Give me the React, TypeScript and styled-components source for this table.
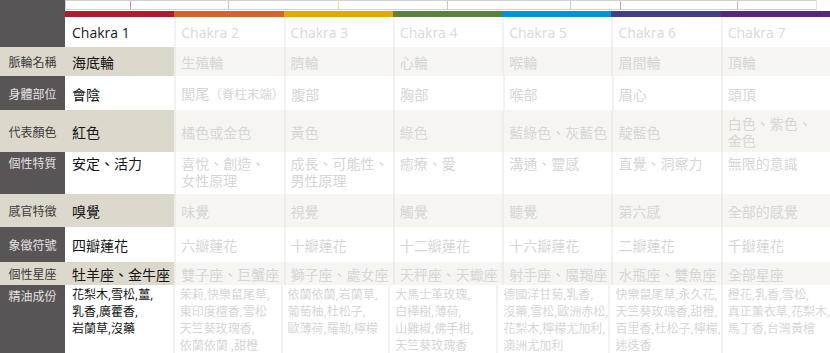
import styled, { createGlobalStyle } from "styled-components"

const GlobalStyle = createGlobalStyle`
    html, body {
        margin: 0;
        padding: 0;
        background: #fff;
        overflow: hidden;
    }
    body {
        font-family: "Open Sans", "Noto Sans CJK TC", sans-serif;
    }
`

type Tone = "white" | "beige"
type Align = "center" | "top"

const colors = ["#b01c2e", "#d4622a", "#e8a800", "#5a8340", "#0093d7", "#433d8d", "#5b2383"]

// marker positions on the track, from the track's left edge
const ticks = [
    { x: 65, c: "#e38b98" },
    { x: 163, c: "#f1b68f" },
    { x: 273, c: "#f3d697" },
    { x: 382, c: "#c3cbaa" },
    { x: 505, c: "#a6d6f2" },
    { x: 555, c: "#aba6d3" },
    { x: 672, c: "#c7b2dd" },
]

const Page = styled.div`
    width: 830px;
    height: 353px;
    overflow: hidden;
`

const Head = styled.div`
    display: grid;
    grid-template-columns: 65px 1fr;
    height: 47px;
`

const Corner = styled.div`
    background: #595556;
`

const HeadRight = styled.div`
    display: flex;
    flex-direction: column;
`

const Track = styled.div`
    position: relative;
    box-sizing: border-box;
    height: 10px;
    margin-right: 13px;
    border: 1px solid #d2d2d2;
    border-right-color: #e4e4e4;
`

const Tick = styled.span<{ $c: string }>`
    position: absolute;
    top: 0;
    bottom: 0;
    width: 1px;
    background: ${p => p.$c};
`

const Bar = styled.div`
    display: grid;
    grid-template-columns: repeat(7, 1fr);
    height: 6px;
    margin-top: 1px;
`

const Swatch = styled.div<{ $c: string }>`
    background: ${p => p.$c};
`

const Titles = styled.div`
    display: grid;
    grid-template-columns: repeat(7, 1fr);
    flex: 1;
`

const Title = styled.div<{ $active: boolean; $first: boolean }>`
    display: flex;
    align-items: center;
    box-sizing: border-box;
    padding-left: ${p => p.$first ? 7 : 5}px;
    border-left: ${p => p.$first ? "none" : "2px solid #f3f2ef"};
    font-size: 14px;
    color: ${p => p.$active ? "#1a1a1a" : "#d9d9d9"};
    white-space: nowrap;
`

const Row = styled.div<{ $h: number }>`
    display: grid;
    grid-template-columns: 65px repeat(7, 1fr);
    height: ${p => p.$h}px;
`

const Label = styled.div<{ $dark: boolean; $align: Align }>`
    display: flex;
    justify-content: center;
    align-items: ${p => p.$align === "top" ? "flex-start" : "center"};
    box-sizing: border-box;
    padding-top: ${p => p.$align === "top" ? 3 : 2}px;
    background: ${p => p.$dark ? "#595556" : "#ddd8cc"};
    color: ${p => p.$dark ? "#e2e2e2" : "#3a3a3a"};
    font-size: 12px;
    line-height: 17px;
    white-space: nowrap;
`

const Cell = styled.div<{ $active: boolean; $tone: Tone; $align: Align; $small: boolean; $first: boolean }>`
    display: flex;
    align-items: ${p => p.$align === "top" ? "flex-start" : "center"};
    box-sizing: border-box;
    padding-left: ${p => p.$first ? 7 : 5}px;
    padding-top: ${p => p.$align === "top" ? (p.$small ? 1 : 3) : 2}px;
    border-left: ${p => p.$first ? "none" : `2px solid ${p.$tone === "beige" ? "#eeece7" : "#f3f2ef"}`};
    background: ${p => p.$tone === "beige" ? (p.$active ? "#ddd8cc" : "#f6f5f2") : "#fff"};
    color: ${p => p.$active ? "#141414" : "#d6d6d6"};
    font-size: ${p => p.$small ? 12 : 14}px;
    line-height: 17px;
    white-space: nowrap;
`

const Aside = styled.span`
    font-size: 12.5px;
`

type RowData = {
    label: string
    dark: boolean
    h: number
    align: Align
    small?: boolean
    cells: (string[] | JSX.Element)[]
}

const rows: RowData[] = [
    { label: "脈輪名稱", dark: false, h: 29, align: "center", cells: [["海底輪"], ["生殖輪"], ["臍輪"], ["心輪"], ["喉輪"], ["眉間輪"], ["頂輪"]] },
    {
        label: "身體部位", dark: true, h: 34, align: "center",
        cells: [["會陰"], <>閭尾<Aside>（脊柱末端）</Aside></>, ["腹部"], ["胸部"], ["喉部"], ["眉心"], ["頭頂"]],
    },
    { label: "代表顏色", dark: false, h: 42, align: "center", cells: [["紅色"], ["橘色或金色"], ["黃色"], ["綠色"], ["藍綠色、灰藍色"], ["靛藍色"], ["白色、紫色、", "金色"]] },
    { label: "個性特質", dark: true, h: 42, align: "top", cells: [["安定、活力"], ["喜悅、創造、", "女性原理"], ["成長、可能性、", "男性原理"], ["癒療、愛"], ["溝通、靈感"], ["直覺、洞察力"], ["無限的意識"]] },
    { label: "感官特徵", dark: false, h: 33, align: "center", cells: [["嗅覺"], ["味覺"], ["視覺"], ["觸覺"], ["聽覺"], ["第六感"], ["全部的感覺"]] },
    { label: "象徵符號", dark: true, h: 35, align: "center", cells: [["四瓣蓮花"], ["六瓣蓮花"], ["十瓣蓮花"], ["十二瓣蓮花"], ["十六瓣蓮花"], ["二瓣蓮花"], ["千瓣蓮花"]] },
    { label: "個性星座", dark: false, h: 23, align: "center", cells: [["牡羊座、金牛座"], ["雙子座、巨蟹座"], ["獅子座、處女座"], ["天秤座、天蠍座"], ["射手座、魔羯座"], ["水瓶座、雙魚座"], ["全部星座"]] },
    {
        label: "精油成份", dark: true, h: 80, align: "top", small: true,
        cells: [
            ["花梨木,雪松,薑,", "乳香,廣藿香,", "岩蘭草,沒藥"],
            ["茉莉,快樂鼠尾草,", "東印度檀香,雪松", "天竺葵玫瑰香,", "依蘭依蘭 ,甜橙"],
            ["依蘭依蘭,岩蘭草,", "葡萄柚,杜松子,", "歐薄荷,羅勒,檸檬"],
            ["大馬士革玫瑰,", "白樺樹,薄荷,", "山雞椒,佛手柑,", "天竺葵玫瑰香"],
            ["德國洋甘菊,乳香,", "沒藥,雪松,歐洲赤松,", "花梨木,檸檬尤加利,", "澳洲尤加利"],
            ["快樂鼠尾草,永久花,", "天竺葵玫瑰香,甜橙,", "百里香,杜松子,檸檬,", "迷迭香"],
            ["橙花,乳香,雪松,", "真正薰衣草,花梨木,", "馬丁香,台灣黃檜"],
        ],
    },
]

function lines(v: string[] | JSX.Element) {
    if (!Array.isArray(v)) return v
    return v.map((l, i) => <span key={i}>{i > 0 && <br />}{l}</span>)
}

export default function App() {
    return (
        <Page>
            <GlobalStyle />
            <Head>
                <Corner />
                <HeadRight>
                    <Track>
                        {ticks.map((t, i) => <Tick key={i} $c={t.c} style={{ left: t.x - 1 }} />)}
                    </Track>
                    <Bar>
                        {colors.map(c => <Swatch key={c} $c={c} />)}
                    </Bar>
                    <Titles>
                        {colors.map((_, i) => (
                            <Title key={i} $active={i === 0} $first={i === 0}>Chakra {i + 1}</Title>
                        ))}
                    </Titles>
                </HeadRight>
            </Head>
            {rows.map(r => (
                <Row key={r.label} $h={r.h}>
                    <Label $dark={r.dark} $align={r.align}>{r.label}</Label>
                    {r.cells.map((c, i) => (
                        <Cell key={i} $active={i === 0} $first={i === 0} $tone={r.dark ? "white" : "beige"} $align={r.align} $small={!!r.small}>
                            <div>{lines(c)}</div>
                        </Cell>
                    ))}
                </Row>
            ))}
        </Page>
    )
}
